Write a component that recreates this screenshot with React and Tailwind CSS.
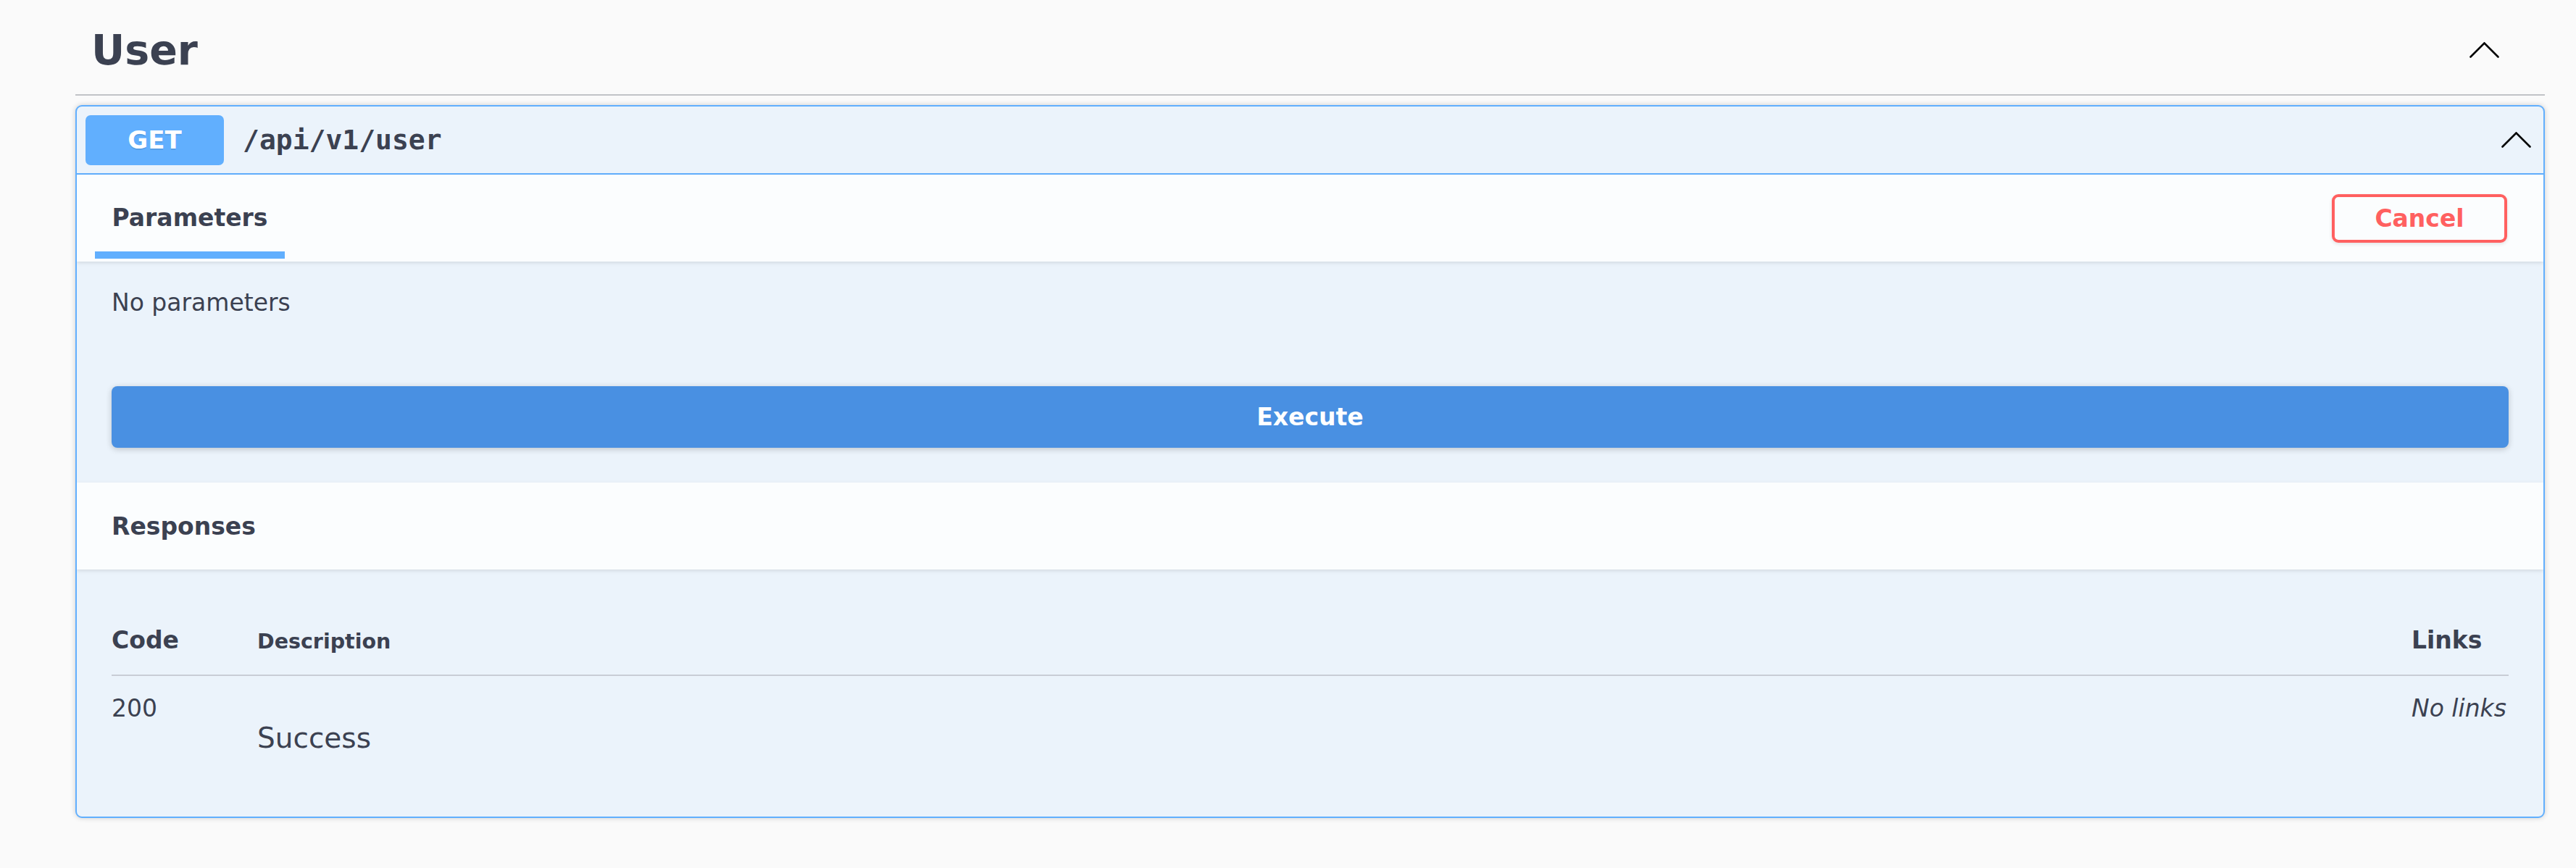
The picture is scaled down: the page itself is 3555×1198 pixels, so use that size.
import React from "react";

function Chevron({ className }) {
  return (
    <svg className={className} width="41" height="22" viewBox="0 0 41 22" fill="none">
      <polyline points="1.5,20.5 20.5,1.5 39.5,20.5" stroke="#000" strokeWidth="2.6" strokeLinecap="round" strokeLinejoin="miter" />
    </svg>
  );
}

export default function App() {
  const sans = "font-['DejaVu_Sans','Liberation_Sans',sans-serif]";
  return (
    <div className={`min-h-[1198px] bg-[#fafafa] pl-[104px] pr-[43px] text-[#3b4151] ${sans}`}>
      {/* Tag header */}
      <div className="flex h-[132px] items-center border-b-2 border-[#c1c3c7] pt-[8px] pl-[22px] pr-[63px]">
        <h3 className="text-[57px] font-bold leading-none">User</h3>
        <Chevron className="ml-auto" />
      </div>

      {/* Operation block */}
      <div className="mt-[13px] overflow-hidden rounded-[9px] border-2 border-[#61affe] bg-[#ebf3fb] shadow-[0_0_7px_rgba(0,0,0,0.19)]">
        {/* Summary */}
        <div className="flex h-[94px] items-center border-b-2 border-[#61affe] pl-[12px] pr-[17px]">
          <div className="flex h-[69px] w-[191px] items-center justify-center rounded-[7px] bg-[#61affe] text-[34px] font-bold leading-none text-white [text-shadow:0_2px_0_rgba(0,0,0,0.1)]">
            GET
          </div>
          <span className="ml-[26px] font-['DejaVu_Sans_Mono','Liberation_Mono',monospace] text-[38px] font-bold leading-none">
            /api/v1/user
          </span>
          <Chevron className="ml-auto" />
        </div>

        {/* Parameters header */}
        <div className="relative z-10 flex h-[120px] items-stretch justify-between bg-[#fbfdfe] shadow-[0_2px_5px_rgba(0,0,0,0.1)]">
          <div className="ml-[25px] flex w-[262px] flex-col">
            <div className="flex flex-1 items-center justify-center pt-[13px] text-[33px] font-bold leading-none">
              Parameters
            </div>
            <div className="mb-[4px] h-[10px] bg-[#61affe]" />
          </div>
          <div className="mr-[50px] flex items-center">
            <button className="flex h-[67px] w-[242px] items-center justify-center rounded-[9px] border-4 border-[#ff6060] bg-transparent text-[33px] font-bold leading-none text-[#ff6060] shadow-[0_2px_5px_rgba(0,0,0,0.1)]">
              Cancel
            </button>
          </div>
        </div>

        {/* Parameters body */}
        <div className="px-[48px] pt-[40px] pb-[48px]">
          <p className="text-[33px] leading-none">No parameters</p>
          <button className="mt-[99px] flex h-[85px] w-full items-center justify-center rounded-[8px] bg-[#4990e2] text-[33px] font-bold leading-none text-white shadow-[0_2px_9px_rgba(0,0,0,0.2)]">
            Execute
          </button>
        </div>

        {/* Responses header */}
        <div className="relative z-10 flex h-[120px] items-center bg-[#fbfdfe] px-[48px] shadow-[0_2px_5px_rgba(0,0,0,0.1)]">
          <h4 className="text-[33px] font-bold leading-none">Responses</h4>
        </div>

        {/* Responses body */}
        <div className="h-[341px] px-[48px] pt-[81px]">
          <div className="grid grid-cols-[201px_1fr_134px] items-end border-b-2 border-[#c8cdd6] pb-[31px]">
            <div className="text-[33px] font-bold leading-none">Code</div>
            <div className="text-[28.5px] font-bold leading-none">Description</div>
            <div className="text-[33px] font-bold leading-none">Links</div>
          </div>
          <div className="grid grid-cols-[201px_1fr_134px] items-start pt-[28px]">
            <div className="text-[33px] leading-none">200</div>
            <div className="pt-[38px] text-[39px] leading-none">Success</div>
            <div className="text-[33px] italic leading-none">No links</div>
          </div>
        </div>
      </div>
    </div>
  );
}
